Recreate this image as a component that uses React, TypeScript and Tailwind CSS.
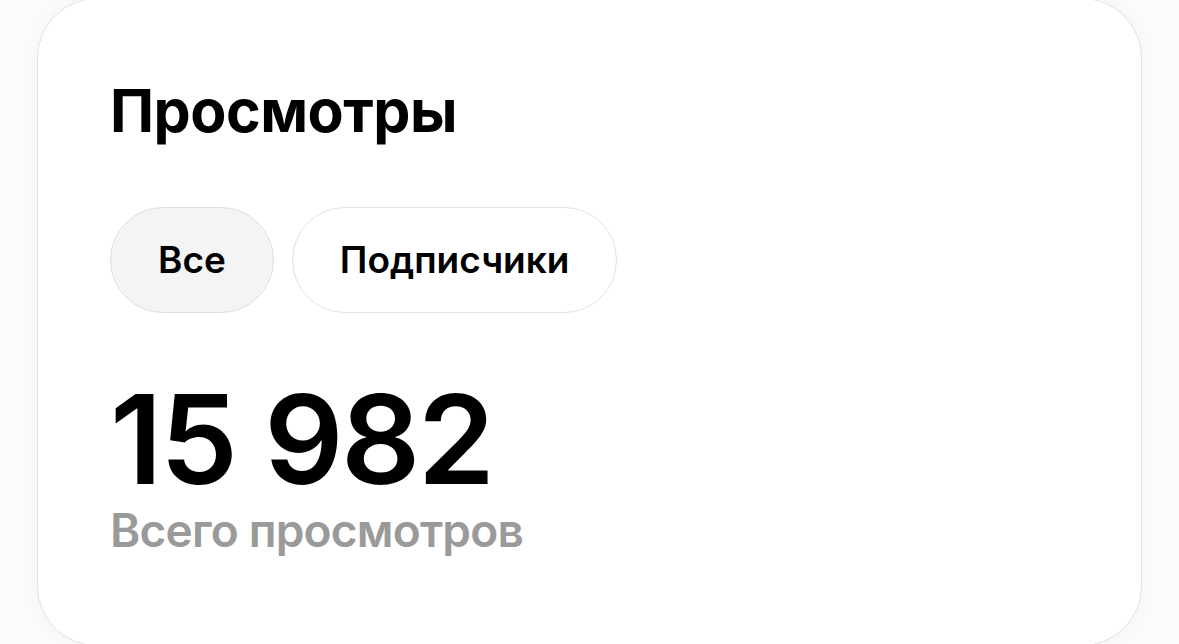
export default function App() {
  return (
    <div
      className="min-h-screen overflow-hidden bg-[#fbfbfb] px-[37px]"
      style={{ fontFamily: "Inter, 'Liberation Sans', sans-serif" }}
    >
      <div className="-mt-[2px] h-[648px] rounded-[60px] border border-[#e2e2e2] bg-white pl-[72px] pt-[82px] shadow-[0_0_24px_rgba(0,0,0,0.03)]">
        <h1 className="text-[59px] font-bold leading-none tracking-[-0.5px] text-black">Просмотры</h1>

        <div className="mt-[67px] flex gap-[18px]">
          <button className="h-[106px] rounded-full border border-[#dedede] bg-[#f4f4f4] px-[47px] text-[37px] font-semibold text-black">
            Все
          </button>
          <button className="h-[106px] rounded-full border border-[#e2e2e2] bg-white px-[47px] text-[37px] font-semibold text-black">
            Подписчики
          </button>
        </div>

        <div className="mt-[64px] text-[124px] font-semibold leading-none tracking-[-2.5px] text-black">15 982</div>
        <div className="mt-[6px] text-[46px] font-semibold leading-none tracking-[-0.8px] text-[#9a9a9a]">Всего просмотров</div>
      </div>
    </div>
  );
}
